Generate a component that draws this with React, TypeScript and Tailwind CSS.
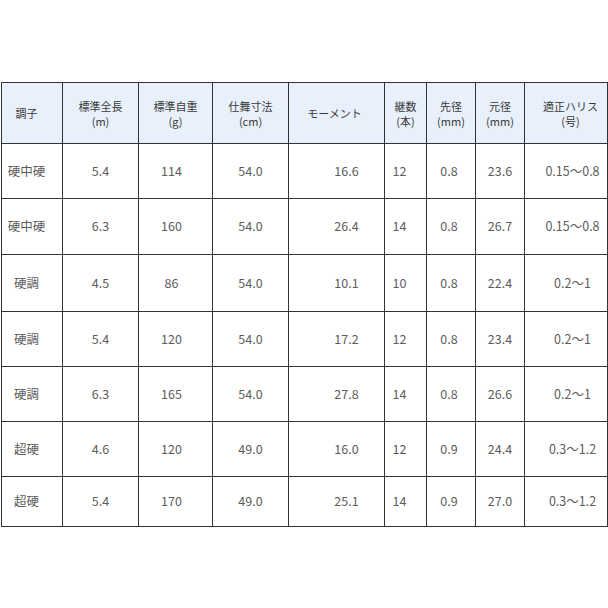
const headers: { top: string; bottom?: string; cls?: string }[] = [
  { top: "調子", cls: "pr-[11px]" },
  { top: "標準全長", bottom: "(m)" },
  { top: "標準自重", bottom: "(g)" },
  { top: "仕舞寸法", bottom: "(cm)" },
  { top: "モーメント", cls: "pr-[4px]" },
  { top: "継数", bottom: "(本)" },
  { top: "先径", bottom: "(mm)" },
  { top: "元径", bottom: "(mm)" },
  { top: "適正ハリス", bottom: "(号)", cls: "pl-[9px]" },
];

const rows: string[][] = [
  ["硬中硬", "5.4", "114", "54.0", "16.6", "12", "0.8", "23.6", "0.15～0.8"],
  ["硬中硬", "6.3", "160", "54.0", "26.4", "14", "0.8", "26.7", "0.15～0.8"],
  ["硬調", "4.5", "86", "54.0", "10.1", "10", "0.8", "22.4", "0.2～1"],
  ["硬調", "5.4", "120", "54.0", "17.2", "12", "0.8", "23.4", "0.2～1"],
  ["硬調", "6.3", "165", "54.0", "27.8", "14", "0.8", "26.6", "0.2～1"],
  ["超硬", "4.6", "120", "49.0", "16.0", "12", "0.9", "24.4", "0.3～1.2"],
  ["超硬", "5.4", "170", "49.0", "25.1", "14", "0.9", "27.0", "0.3～1.2"],
];

// per-column nudges for body text
const bodyCls = [
  "pr-[11px]",
  "",
  "pr-[8px]",
  "",
  "pl-[20px]",
  "pr-[12px]",
  "pr-[4px]",
  "",
  "pl-[13px]",
];

const rowHeights = ["h-[54px]", "h-[55px]", "h-[56px]", "h-[54px]", "h-[54px]", "h-[54px]", "h-[49px]"];

export default function App() {
  return (
    <div
      className="min-h-screen bg-white pt-[82px] pl-[1px]"
      style={{ fontFamily: '"Noto Sans CJK JP", "Noto Sans", sans-serif' }}
    >
      <div className="grid w-[607px] grid-cols-[60px_75px_73px_75px_95px_41px_48px_48px_82px] gap-px bg-[#333333] p-px">
        {headers.map((h, i) => (
          <div
            key={i}
            className={`flex h-[60px] flex-col items-center justify-center bg-[#e8f0fc] text-[11px] leading-[16px] text-[#3a3a3a] ${h.cls ?? ""}`}
          >
            <span>{h.top}</span>
            {h.bottom && <span className="-mt-px">{h.bottom}</span>}
          </div>
        ))}
        {rows.map((r, ri) =>
          r.map((c, ci) => (
            <div
              key={`${ri}-${ci}`}
              className={`flex items-center justify-center bg-white text-[12.5px] text-[#5c5c5c] ${rowHeights[ri]} ${bodyCls[ci]}`}
            >
              {c}
            </div>
          ))
        )}
      </div>
    </div>
  );
}
